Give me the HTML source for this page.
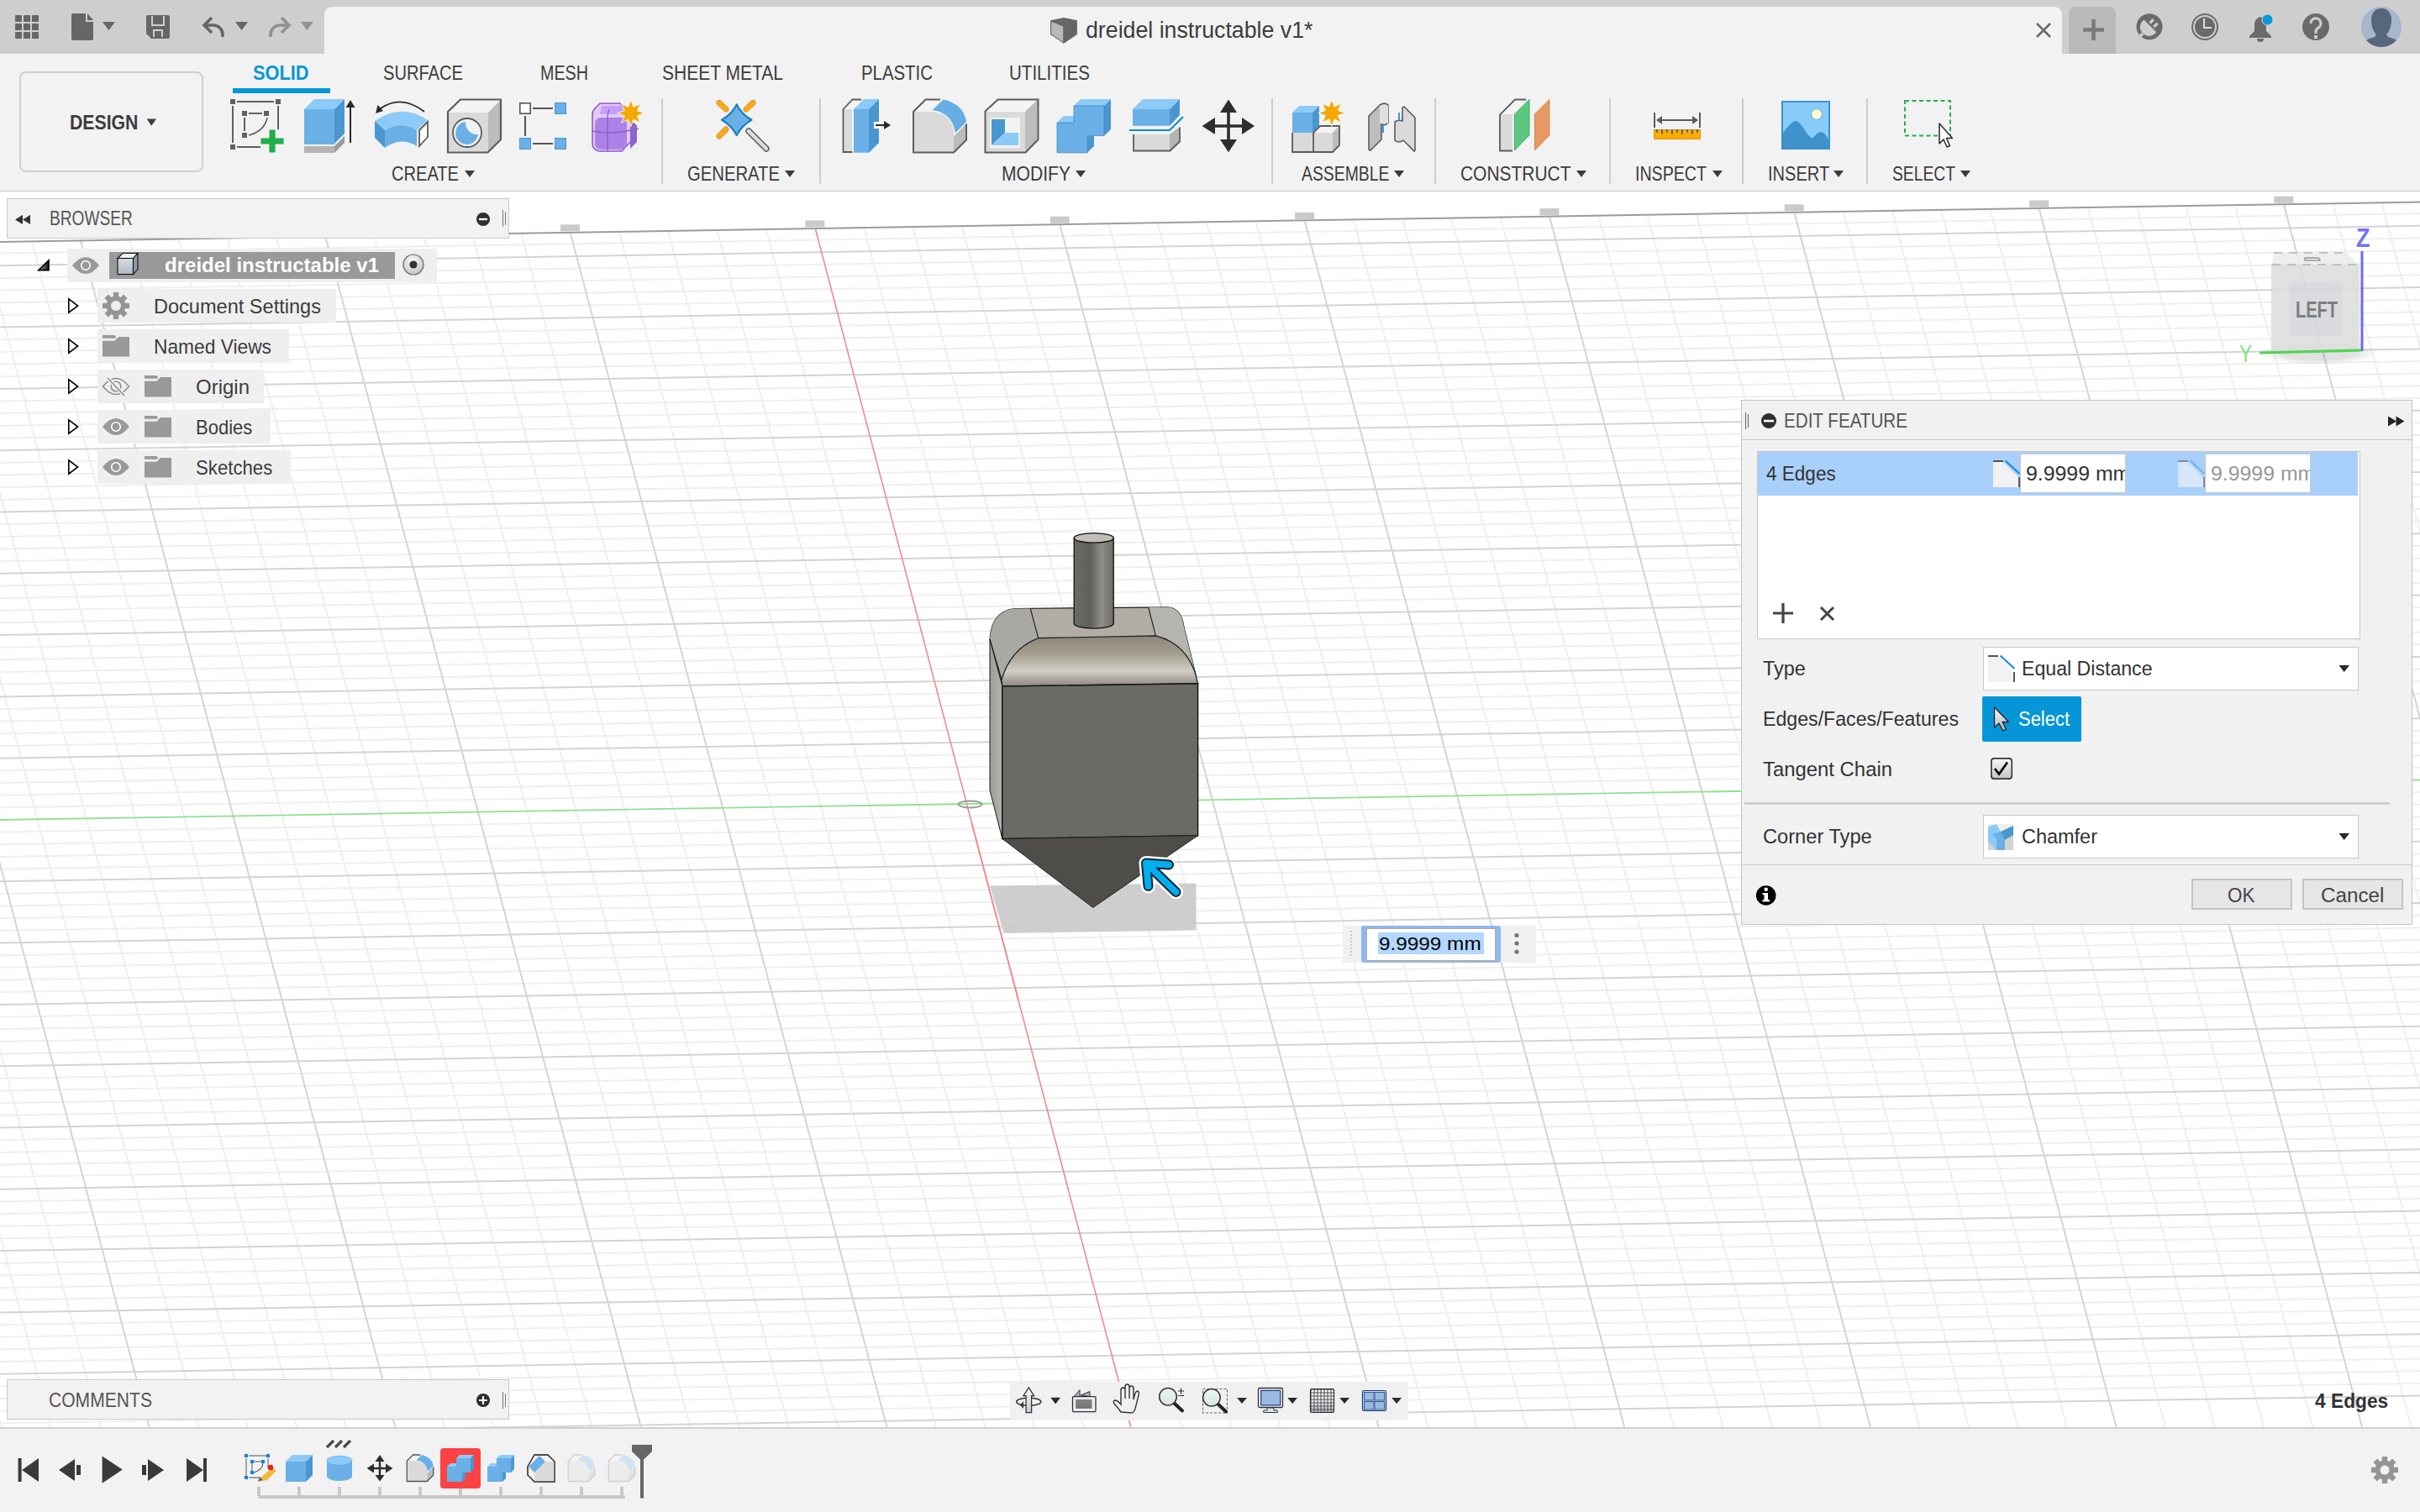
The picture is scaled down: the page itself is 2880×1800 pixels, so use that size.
<!DOCTYPE html><html><head><meta charset="utf-8"><style>
html,body{margin:0;padding:0}
body{width:2880px;height:1800px;position:relative;overflow:hidden;background:#fff;font-family:"Liberation Sans",sans-serif}
.t{position:absolute;white-space:nowrap;line-height:1;transform-origin:0 0;-webkit-font-smoothing:antialiased}
</style></head><body>
<svg style="position:absolute;left:0px;top:0px;" width="2880" height="1800" viewBox="0 0 2880 1800"><defs><clipPath id="gc"><polygon points="0,288 2880,240.5 2880,1700 0,1700"/></clipPath></defs><g clip-path="url(#gc)"><g stroke="#eeeeee" stroke-width="1.8"><line x1="0.0" y1="257.7" x2="2880.0" y2="210.1"/><line x1="0.0" y1="272.3" x2="2880.0" y2="224.8"/><line x1="0.0" y1="287.0" x2="2880.0" y2="239.5"/><line x1="0.0" y1="301.6" x2="2880.0" y2="254.1"/><line x1="0.0" y1="331.0" x2="2880.0" y2="283.4"/><line x1="0.0" y1="345.6" x2="2880.0" y2="298.1"/><line x1="0.0" y1="360.3" x2="2880.0" y2="312.8"/><line x1="0.0" y1="374.9" x2="2880.0" y2="327.4"/><line x1="0.0" y1="404.3" x2="2880.0" y2="356.7"/><line x1="0.0" y1="418.9" x2="2880.0" y2="371.4"/><line x1="0.0" y1="433.6" x2="2880.0" y2="386.1"/><line x1="0.0" y1="448.2" x2="2880.0" y2="400.7"/><line x1="0.0" y1="477.6" x2="2880.0" y2="430.0"/><line x1="0.0" y1="492.2" x2="2880.0" y2="444.7"/><line x1="0.0" y1="506.9" x2="2880.0" y2="459.4"/><line x1="0.0" y1="521.5" x2="2880.0" y2="474.0"/><line x1="0.0" y1="550.9" x2="2880.0" y2="503.3"/><line x1="0.0" y1="565.5" x2="2880.0" y2="518.0"/><line x1="0.0" y1="580.2" x2="2880.0" y2="532.7"/><line x1="0.0" y1="594.8" x2="2880.0" y2="547.3"/><line x1="0.0" y1="624.2" x2="2880.0" y2="576.6"/><line x1="0.0" y1="638.8" x2="2880.0" y2="591.3"/><line x1="0.0" y1="653.5" x2="2880.0" y2="606.0"/><line x1="0.0" y1="668.1" x2="2880.0" y2="620.6"/><line x1="0.0" y1="697.5" x2="2880.0" y2="649.9"/><line x1="0.0" y1="712.1" x2="2880.0" y2="664.6"/><line x1="0.0" y1="726.8" x2="2880.0" y2="679.3"/><line x1="0.0" y1="741.4" x2="2880.0" y2="693.9"/><line x1="0.0" y1="770.8" x2="2880.0" y2="723.2"/><line x1="0.0" y1="785.4" x2="2880.0" y2="737.9"/><line x1="0.0" y1="800.1" x2="2880.0" y2="752.6"/><line x1="0.0" y1="814.7" x2="2880.0" y2="767.2"/><line x1="0.0" y1="844.1" x2="2880.0" y2="796.5"/><line x1="0.0" y1="858.7" x2="2880.0" y2="811.2"/><line x1="0.0" y1="873.4" x2="2880.0" y2="825.9"/><line x1="0.0" y1="888.0" x2="2880.0" y2="840.5"/><line x1="0.0" y1="917.4" x2="2880.0" y2="869.8"/><line x1="0.0" y1="932.0" x2="2880.0" y2="884.5"/><line x1="0.0" y1="946.7" x2="2880.0" y2="899.2"/><line x1="0.0" y1="961.3" x2="2880.0" y2="913.8"/><line x1="0.0" y1="990.7" x2="2880.0" y2="943.1"/><line x1="0.0" y1="1005.3" x2="2880.0" y2="957.8"/><line x1="0.0" y1="1020.0" x2="2880.0" y2="972.5"/><line x1="0.0" y1="1034.6" x2="2880.0" y2="987.1"/><line x1="0.0" y1="1064.0" x2="2880.0" y2="1016.4"/><line x1="0.0" y1="1078.6" x2="2880.0" y2="1031.1"/><line x1="0.0" y1="1093.3" x2="2880.0" y2="1045.8"/><line x1="0.0" y1="1107.9" x2="2880.0" y2="1060.4"/><line x1="0.0" y1="1137.3" x2="2880.0" y2="1089.7"/><line x1="0.0" y1="1151.9" x2="2880.0" y2="1104.4"/><line x1="0.0" y1="1166.6" x2="2880.0" y2="1119.1"/><line x1="0.0" y1="1181.2" x2="2880.0" y2="1133.7"/><line x1="0.0" y1="1210.6" x2="2880.0" y2="1163.0"/><line x1="0.0" y1="1225.2" x2="2880.0" y2="1177.7"/><line x1="0.0" y1="1239.9" x2="2880.0" y2="1192.4"/><line x1="0.0" y1="1254.5" x2="2880.0" y2="1207.0"/><line x1="0.0" y1="1283.9" x2="2880.0" y2="1236.3"/><line x1="0.0" y1="1298.5" x2="2880.0" y2="1251.0"/><line x1="0.0" y1="1313.2" x2="2880.0" y2="1265.7"/><line x1="0.0" y1="1327.8" x2="2880.0" y2="1280.3"/><line x1="0.0" y1="1357.2" x2="2880.0" y2="1309.6"/><line x1="0.0" y1="1371.8" x2="2880.0" y2="1324.3"/><line x1="0.0" y1="1386.5" x2="2880.0" y2="1339.0"/><line x1="0.0" y1="1401.1" x2="2880.0" y2="1353.6"/><line x1="0.0" y1="1430.5" x2="2880.0" y2="1382.9"/><line x1="0.0" y1="1445.1" x2="2880.0" y2="1397.6"/><line x1="0.0" y1="1459.8" x2="2880.0" y2="1412.3"/><line x1="0.0" y1="1474.4" x2="2880.0" y2="1426.9"/><line x1="0.0" y1="1503.8" x2="2880.0" y2="1456.2"/><line x1="0.0" y1="1518.4" x2="2880.0" y2="1470.9"/><line x1="0.0" y1="1533.1" x2="2880.0" y2="1485.6"/><line x1="0.0" y1="1547.7" x2="2880.0" y2="1500.2"/><line x1="0.0" y1="1577.1" x2="2880.0" y2="1529.5"/><line x1="0.0" y1="1591.7" x2="2880.0" y2="1544.2"/><line x1="0.0" y1="1606.4" x2="2880.0" y2="1558.9"/><line x1="0.0" y1="1621.0" x2="2880.0" y2="1573.5"/><line x1="0.0" y1="1650.4" x2="2880.0" y2="1602.8"/><line x1="0.0" y1="1665.0" x2="2880.0" y2="1617.5"/><line x1="0.0" y1="1679.7" x2="2880.0" y2="1632.2"/><line x1="0.0" y1="1694.3" x2="2880.0" y2="1646.8"/><line x1="-387.7" y1="228.0" x2="2.4" y2="1700.0"/><line x1="-329.2" y1="228.0" x2="60.9" y2="1700.0"/><line x1="-270.7" y1="228.0" x2="119.4" y2="1700.0"/><line x1="-153.6" y1="228.0" x2="236.5" y2="1700.0"/><line x1="-95.1" y1="228.0" x2="295.0" y2="1700.0"/><line x1="-36.6" y1="228.0" x2="353.5" y2="1700.0"/><line x1="21.9" y1="228.0" x2="412.0" y2="1700.0"/><line x1="139.0" y1="228.0" x2="529.1" y2="1700.0"/><line x1="197.5" y1="228.0" x2="587.6" y2="1700.0"/><line x1="256.0" y1="228.0" x2="646.1" y2="1700.0"/><line x1="314.5" y1="228.0" x2="704.6" y2="1700.0"/><line x1="431.6" y1="228.0" x2="821.7" y2="1700.0"/><line x1="490.1" y1="228.0" x2="880.2" y2="1700.0"/><line x1="548.6" y1="228.0" x2="938.7" y2="1700.0"/><line x1="607.1" y1="228.0" x2="997.2" y2="1700.0"/><line x1="724.2" y1="228.0" x2="1114.3" y2="1700.0"/><line x1="782.7" y1="228.0" x2="1172.8" y2="1700.0"/><line x1="841.2" y1="228.0" x2="1231.3" y2="1700.0"/><line x1="899.8" y1="228.0" x2="1289.8" y2="1700.0"/><line x1="1016.8" y1="228.0" x2="1406.9" y2="1700.0"/><line x1="1075.3" y1="228.0" x2="1465.4" y2="1700.0"/><line x1="1133.8" y1="228.0" x2="1523.9" y2="1700.0"/><line x1="1192.3" y1="228.0" x2="1582.4" y2="1700.0"/><line x1="1309.4" y1="228.0" x2="1699.5" y2="1700.0"/><line x1="1367.9" y1="228.0" x2="1758.0" y2="1700.0"/><line x1="1426.4" y1="228.0" x2="1816.5" y2="1700.0"/><line x1="1485.0" y1="228.0" x2="1875.0" y2="1700.0"/><line x1="1602.0" y1="228.0" x2="1992.1" y2="1700.0"/><line x1="1660.5" y1="228.0" x2="2050.6" y2="1700.0"/><line x1="1719.0" y1="228.0" x2="2109.1" y2="1700.0"/><line x1="1777.5" y1="228.0" x2="2167.6" y2="1700.0"/><line x1="1894.6" y1="228.0" x2="2284.7" y2="1700.0"/><line x1="1953.1" y1="228.0" x2="2343.2" y2="1700.0"/><line x1="2011.6" y1="228.0" x2="2401.7" y2="1700.0"/><line x1="2070.2" y1="228.0" x2="2460.2" y2="1700.0"/><line x1="2187.2" y1="228.0" x2="2577.3" y2="1700.0"/><line x1="2245.7" y1="228.0" x2="2635.8" y2="1700.0"/><line x1="2304.2" y1="228.0" x2="2694.3" y2="1700.0"/><line x1="2362.7" y1="228.0" x2="2752.8" y2="1700.0"/><line x1="2479.8" y1="228.0" x2="2869.9" y2="1700.0"/><line x1="2538.3" y1="228.0" x2="2928.4" y2="1700.0"/><line x1="2596.8" y1="228.0" x2="2986.9" y2="1700.0"/><line x1="2655.3" y1="228.0" x2="3045.4" y2="1700.0"/><line x1="2772.4" y1="228.0" x2="3162.5" y2="1700.0"/><line x1="2830.9" y1="228.0" x2="3221.0" y2="1700.0"/><line x1="2889.4" y1="228.0" x2="3279.5" y2="1700.0"/></g><g stroke="#d4d4d4" stroke-width="2"><line x1="0.0" y1="316.3" x2="2880.0" y2="268.8"/><line x1="0.0" y1="389.6" x2="2880.0" y2="342.1"/><line x1="0.0" y1="462.9" x2="2880.0" y2="415.4"/><line x1="0.0" y1="536.2" x2="2880.0" y2="488.7"/><line x1="0.0" y1="609.5" x2="2880.0" y2="562.0"/><line x1="0.0" y1="682.8" x2="2880.0" y2="635.3"/><line x1="0.0" y1="756.1" x2="2880.0" y2="708.6"/><line x1="0.0" y1="829.4" x2="2880.0" y2="781.9"/><line x1="0.0" y1="902.7" x2="2880.0" y2="855.2"/><line x1="0.0" y1="1049.3" x2="2880.0" y2="1001.8"/><line x1="0.0" y1="1122.6" x2="2880.0" y2="1075.1"/><line x1="0.0" y1="1195.9" x2="2880.0" y2="1148.4"/><line x1="0.0" y1="1269.2" x2="2880.0" y2="1221.7"/><line x1="0.0" y1="1342.5" x2="2880.0" y2="1295.0"/><line x1="0.0" y1="1415.8" x2="2880.0" y2="1368.3"/><line x1="0.0" y1="1489.1" x2="2880.0" y2="1441.6"/><line x1="0.0" y1="1562.4" x2="2880.0" y2="1514.9"/><line x1="0.0" y1="1635.7" x2="2880.0" y2="1588.2"/><line x1="0.0" y1="1709.0" x2="2880.0" y2="1661.5"/><line x1="-212.1" y1="228.0" x2="177.9" y2="1700.0"/><line x1="80.5" y1="228.0" x2="470.6" y2="1700.0"/><line x1="373.1" y1="228.0" x2="763.1" y2="1700.0"/><line x1="665.7" y1="228.0" x2="1055.8" y2="1700.0"/><line x1="1250.9" y1="228.0" x2="1641.0" y2="1700.0"/><line x1="1543.5" y1="228.0" x2="1933.5" y2="1700.0"/><line x1="1836.1" y1="228.0" x2="2226.2" y2="1700.0"/><line x1="2128.7" y1="228.0" x2="2518.8" y2="1700.0"/><line x1="2421.3" y1="228.0" x2="2811.4" y2="1700.0"/><line x1="2713.9" y1="228.0" x2="3103.9" y2="1700.0"/></g><line x1="970" y1="271" x2="1346" y2="1700" stroke="#f08a8a" stroke-width="1.6"/><line x1="0" y1="976" x2="2880" y2="928.5" stroke="#90e090" stroke-width="1.8"/></g><line x1="0" y1="288" x2="2880" y2="240.5" stroke="#9c9c9c" stroke-width="2"/><rect x="667.1" y="267.3" width="23" height="8" fill="#b8b8b8" opacity="0.75"/><rect x="958.4" y="262.5" width="23" height="8" fill="#b8b8b8" opacity="0.75"/><rect x="1249.8" y="257.7" width="23" height="8" fill="#b8b8b8" opacity="0.75"/><rect x="1541.1" y="252.9" width="23" height="8" fill="#b8b8b8" opacity="0.75"/><rect x="1832.4" y="248.1" width="23" height="8" fill="#b8b8b8" opacity="0.75"/><rect x="2123.7" y="243.3" width="23" height="8" fill="#b8b8b8" opacity="0.75"/><rect x="2415.1" y="238.5" width="23" height="8" fill="#b8b8b8" opacity="0.75"/><rect x="2706.4" y="233.7" width="23" height="8" fill="#b8b8b8" opacity="0.75"/></svg>
<div style="position:absolute;left:0px;top:0px;width:2880px;height:64px;background:#cecece"></div>
<div style="position:absolute;left:386px;top:8px;width:2068px;height:56px;background:#f2f2f2;border-radius:9px 9px 0 0"></div>
<div style="position:absolute;left:2462px;top:8px;width:56px;height:56px;background:#b9b9b9;border-radius:8px 8px 0 0"></div>
<div class="t" style="left:1291.50px;top:22.45px;font-size:27.59px;color:#3c3c3c;transform:scaleX(0.9692);">dreidel instructable v1*</div>
<div style="position:absolute;left:0px;top:64px;width:2880px;height:163px;background:#f2f2f2"></div>
<div style="position:absolute;left:0px;top:227px;width:2880px;height:1px;background:#c8c8c8"></div>
<div style="position:absolute;left:23px;top:85px;width:219px;height:120px;border:2px solid #cfcfcf;border-radius:8px;box-sizing:border-box"></div>
<div class="t" style="left:83.00px;top:133.50px;font-size:23.98px;color:#3c3c3c;font-weight:bold;transform:scaleX(0.8864);">DESIGN</div>
<div class="t" style="left:300.50px;top:74.50px;font-size:23.98px;color:#0696d7;font-weight:bold;transform:scaleX(0.9073);">SOLID</div>
<div style="position:absolute;left:277px;top:105px;width:116px;height:6px;background:#0696d7"></div>
<div class="t" style="left:456.00px;top:74.50px;font-size:23.98px;color:#3c3c3c;transform:scaleX(0.8387);">SURFACE</div>
<div class="t" style="left:643.00px;top:74.50px;font-size:23.98px;color:#3c3c3c;transform:scaleX(0.8227);">MESH</div>
<div class="t" style="left:788.00px;top:74.50px;font-size:23.98px;color:#3c3c3c;transform:scaleX(0.8760);">SHEET METAL</div>
<div class="t" style="left:1025.00px;top:74.50px;font-size:23.98px;color:#3c3c3c;transform:scaleX(0.8503);">PLASTIC</div>
<div class="t" style="left:1201.00px;top:74.50px;font-size:23.98px;color:#3c3c3c;transform:scaleX(0.8575);">UTILITIES</div>
<div class="t" style="left:466.00px;top:195.91px;font-size:23.26px;color:#3c3c3c;transform:scaleX(0.8639);">CREATE</div>
<div class="t" style="left:818.00px;top:195.91px;font-size:23.26px;color:#3c3c3c;transform:scaleX(0.8716);">GENERATE</div>
<div class="t" style="left:1191.50px;top:195.91px;font-size:23.26px;color:#3c3c3c;transform:scaleX(0.9078);">MODIFY</div>
<div class="t" style="left:1549.00px;top:195.91px;font-size:23.26px;color:#3c3c3c;transform:scaleX(0.8335);">ASSEMBLE</div>
<div class="t" style="left:1738.00px;top:195.91px;font-size:23.26px;color:#3c3c3c;transform:scaleX(0.9008);">CONSTRUCT</div>
<div class="t" style="left:1946.00px;top:195.91px;font-size:23.26px;color:#3c3c3c;transform:scaleX(0.8433);">INSPECT</div>
<div class="t" style="left:2103.80px;top:195.91px;font-size:23.26px;color:#3c3c3c;transform:scaleX(0.8626);">INSERT</div>
<div class="t" style="left:2252.00px;top:195.91px;font-size:23.26px;color:#3c3c3c;transform:scaleX(0.8290);">SELECT</div>
<div style="position:absolute;left:787px;top:117px;width:2px;height:102px;background:#cdcdcd"></div>
<div style="position:absolute;left:975px;top:117px;width:2px;height:102px;background:#cdcdcd"></div>
<div style="position:absolute;left:1513px;top:117px;width:2px;height:102px;background:#cdcdcd"></div>
<div style="position:absolute;left:1707px;top:117px;width:2px;height:102px;background:#cdcdcd"></div>
<div style="position:absolute;left:1914.6px;top:117px;width:2.0px;height:102px;background:#cdcdcd"></div>
<div style="position:absolute;left:2073px;top:117px;width:2px;height:102px;background:#cdcdcd"></div>
<div style="position:absolute;left:2221px;top:117px;width:2px;height:102px;background:#cdcdcd"></div>
<svg style="position:absolute;left:0px;top:0px;" width="2880" height="1800" viewBox="0 0 2880 1800"><defs><linearGradient id="band" x1="0" y1="0" x2="0" y2="1"><stop offset="0" stop-color="#8a857a"/><stop offset="0.35" stop-color="#a39d8e"/><stop offset="0.7" stop-color="#d2cec6"/><stop offset="1" stop-color="#8c8880"/></linearGradient><linearGradient id="post" x1="0" y1="0" x2="1" y2="0"><stop offset="0" stop-color="#6c6c68"/><stop offset="0.4" stop-color="#5e5e5a"/><stop offset="0.7" stop-color="#8e8d88"/><stop offset="1" stop-color="#6e6d68"/></linearGradient><linearGradient id="side" x1="0" y1="0" x2="1" y2="0"><stop offset="0" stop-color="#9c9b96"/><stop offset="1" stop-color="#b4b3ad"/></linearGradient><linearGradient id="shadow" x1="0" y1="0" x2="0" y2="1"><stop offset="0" stop-color="#dcdcdc"/><stop offset="1" stop-color="#cccccc"/></linearGradient></defs><polygon points="1178,1054.5 1423.5,1051.5 1423.5,1107.5 1194.5,1111" fill="#cacaca" opacity="0.92"/><line x1="1156.5" y1="980" x2="1211.8" y2="1190" stroke="#f08a8a" stroke-width="1.6"/><path d="M1178,761 Q1180,728 1207,724.5 L1390,722.8 Q1406,724 1409,746.6 L1423.4,804.8 L1192,809 Z" fill="#b1ada4" stroke="#1a1a1a" stroke-width="1.2"/><path d="M1178,761 Q1180,728 1207,724.5 L1226.2,724.5 L1235.7,759.7 Q1205,770 1192,809 Z" fill="#a9a8a2"/><path d="M1366.7,722.8 L1390,722.8 Q1406,724 1409,746.6 L1423.4,804.8 Q1410,768 1375.4,756.8 Z" fill="#b6b4ae"/><path d="M1226.2,724.5 L1235.7,759.7 M1366.7,722.8 L1375.4,756.8 M1178,761 L1192,809" stroke="#1a1a1a" stroke-width="1.1" fill="none"/><polygon points="1178,761 1192.8,817 1192.8,998.5 1178,940.7" fill="url(#side)" stroke="#1a1a1a" stroke-width="1"/><path d="M1235.7,759.7 L1375.4,756.8 Q1412,766 1423.4,804.8 L1425.6,813.8 L1192.8,817 L1192,809 Q1203,772 1235.7,759.7 Z" fill="url(#band)" stroke="#1a1a1a" stroke-width="1.2"/><polygon points="1192.8,817 1425.6,813.8 1425.6,994.7 1192.8,998.5" fill="#6b6b66" stroke="#111" stroke-width="1.4"/><polygon points="1192.8,998.5 1425.6,994.7 1300.7,1080.4" fill="#4f4d49" stroke="#222" stroke-width="1"/><path d="M1278.2,640.4 V742.3 A23.5,5.8 0 0 0 1325.2,742.3 V640.4 Z" fill="url(#post)" stroke="#111" stroke-width="1.3"/><ellipse cx="1301.7" cy="640.4" rx="23.5" ry="5.8" fill="#c2beb6" stroke="#111" stroke-width="1.3"/><path d="M1391,1029.5 L1364,1027.5 L1366.5,1055 M1364,1027.5 L1399.5,1062" fill="none" stroke="#fff" stroke-width="17" stroke-linejoin="round" stroke-linecap="round"/><path d="M1391,1029.5 L1364,1027.5 L1366.5,1055 M1364,1027.5 L1399.5,1062" fill="none" stroke="#0c2636" stroke-width="12" stroke-linejoin="round" stroke-linecap="round"/><path d="M1391,1029.5 L1364,1027.5 L1366.5,1055 M1364,1027.5 L1399.5,1062" fill="none" stroke="#02aeee" stroke-width="8" stroke-linejoin="round" stroke-linecap="round"/><ellipse cx="1154.5" cy="957.5" rx="14" ry="4" fill="none" stroke="#9a9a9a" stroke-width="1.8"/><defs><radialGradient id="vcs" cx="0.5" cy="0.5" r="0.5"><stop offset="0.6" stop-color="#000" stop-opacity="0.12"/><stop offset="1" stop-color="#000" stop-opacity="0"/></radialGradient></defs><ellipse cx="2760" cy="420" rx="70" ry="14" fill="url(#vcs)"/><g opacity="0.88"><polygon points="2704,315 2706,301 2792,301 2808,315" fill="#ececec"/><rect x="2703" y="315" width="105" height="103" fill="#dedede"/><rect x="2724" y="336" width="64" height="64" fill="#d6d7da"/><path d="M2706,301 h86 M2704,315 h104" stroke="#aaa" stroke-width="1.5" stroke-dasharray="10,8"/><path d="M2743,307 h14 q4,0 4,3 h-18 z" fill="none" stroke="#888" stroke-width="1.5"/></g><text x="2732" y="378" font-family="Liberation Sans" font-weight="bold" font-size="27" fill="#7b7d82" textLength="50" lengthAdjust="spacingAndGlyphs">LEFT</text><path d="M2811,299 V418" stroke="#6a6af6" stroke-width="3"/><path d="M2689,420 L2810,417" stroke="#4fd64f" stroke-width="3.2"/><text x="2804" y="294" font-family="Liberation Sans" font-weight="bold" font-size="32" fill="#7474f4" textLength="16.5" lengthAdjust="spacingAndGlyphs">Z</text><text x="2665" y="431" font-family="Liberation Sans" font-size="30" fill="#7ee87e" textLength="15" lengthAdjust="spacingAndGlyphs">Y</text></svg>
<div style="position:absolute;left:8px;top:236px;width:598px;height:48px;background:#f2f2f2;border:1px solid #c9c9c9;box-sizing:border-box"></div>
<div class="t" style="left:58.70px;top:249.11px;font-size:23.26px;color:#555;transform:scaleX(0.8214);">BROWSER</div>
<div style="position:absolute;left:80px;top:296px;width:440px;height:40px;background:#efefef"></div>
<div style="position:absolute;left:130px;top:300px;width:340px;height:32px;background:#999"></div>
<div class="t" style="left:196.00px;top:303.78px;font-size:24.83px;color:#fff;font-weight:bold;transform:scaleX(0.9676);">dreidel instructable v1</div>
<div style="position:absolute;left:116px;top:344px;width:284px;height:40px;background:#efefef"></div>
<div class="t" style="left:183.00px;top:352.62px;font-size:23.84px;color:#3c3c3c;transform:scaleX(0.9881);">Document Settings</div>
<div style="position:absolute;left:116px;top:392px;width:228px;height:40px;background:#efefef"></div>
<div class="t" style="left:183.00px;top:400.62px;font-size:23.84px;color:#3c3c3c;transform:scaleX(0.9548);">Named Views</div>
<div style="position:absolute;left:116px;top:440px;width:198px;height:40px;background:#efefef"></div>
<div class="t" style="left:232.70px;top:448.62px;font-size:23.84px;color:#3c3c3c;transform:scaleX(1.0063);">Origin</div>
<div style="position:absolute;left:116px;top:488px;width:206px;height:40px;background:#efefef"></div>
<div class="t" style="left:232.70px;top:496.62px;font-size:23.84px;color:#3c3c3c;transform:scaleX(0.9233);">Bodies</div>
<div style="position:absolute;left:116px;top:536px;width:230px;height:40px;background:#efefef"></div>
<div class="t" style="left:232.70px;top:544.62px;font-size:23.84px;color:#3c3c3c;transform:scaleX(0.9312);">Sketches</div>
<div style="position:absolute;left:8px;top:1642px;width:598px;height:48px;background:#f2f2f2;border:1px solid #c9c9c9;box-sizing:border-box"></div>
<div class="t" style="left:58.00px;top:1655.81px;font-size:23.26px;color:#555;transform:scaleX(0.9067);">COMMENTS</div>
<div style="position:absolute;left:0px;top:1700px;width:2880px;height:100px;background:#f2f2f2"></div>
<div style="position:absolute;left:0px;top:1699px;width:2880px;height:2px;background:#d0d0d0"></div>
<div class="t" style="left:2754.70px;top:1656.28px;font-size:24.71px;color:#333;font-weight:bold;transform:scaleX(0.9213);">4 Edges</div>
<div style="position:absolute;left:2072px;top:476px;width:799px;height:48px;background:#f1f1f1;border:1px solid #c6c6c6;box-sizing:border-box"></div>
<div class="t" style="left:2123.00px;top:488.88px;font-size:24.71px;color:#555;transform:scaleX(0.8344);">EDIT FEATURE</div>
<div style="position:absolute;left:2072px;top:524px;width:799px;height:506px;background:#f1f1f1;border:1px solid #c6c6c6;border-top:none;box-sizing:border-box"></div>
<div style="position:absolute;left:2072px;top:1029px;width:799px;height:72px;background:#f1f1f1;border:1px solid #c6c6c6;box-sizing:border-box"></div>
<div style="position:absolute;left:2091px;top:537px;width:718px;height:224px;background:#fff;border:1px solid #c6c6c6;box-sizing:border-box"></div>
<div style="position:absolute;left:2092px;top:538px;width:714px;height:52px;background:#a9d0fb"></div>
<div class="t" style="left:2102.00px;top:552.67px;font-size:23.55px;color:#333;transform:scaleX(0.9573);">4 Edges</div>
<div style="position:absolute;left:2404px;top:540px;width:126px;height:47px;background:#fff;border:1px solid #c8c8c8;box-sizing:border-box;overflow:hidden"></div>
<div style="position:absolute;left:2405px;top:541px;width:124px;height:45px;overflow:hidden"><div class="t" style="left:5.70px;top:11.67px;font-size:23.55px;color:#333;transform:scaleX(1.0554)">9.9999 mm</div></div>
<div style="position:absolute;left:2624px;top:540px;width:126px;height:47px;background:#fff;border:1px solid #c8c8c8;box-sizing:border-box"></div>
<div style="position:absolute;left:2625px;top:541px;width:124px;height:45px;overflow:hidden"><div class="t" style="left:5.70px;top:11.67px;font-size:23.55px;color:#999;transform:scaleX(1.0554)">9.9999 mm</div></div>
<div style="position:absolute;left:2076px;top:955px;width:768px;height:3px;background:#cfcfcf"></div>
<div class="t" style="left:2098.00px;top:784.87px;font-size:23.55px;color:#333;transform:scaleX(0.9951);">Type</div>
<div class="t" style="left:2098.00px;top:845.27px;font-size:23.55px;color:#333;transform:scaleX(0.9835);">Edges/Faces/Features</div>
<div class="t" style="left:2098.00px;top:904.87px;font-size:23.55px;color:#333;transform:scaleX(1.0141);">Tangent Chain</div>
<div class="t" style="left:2098.00px;top:984.87px;font-size:23.55px;color:#333;transform:scaleX(1.0044);">Corner Type</div>
<div style="position:absolute;left:2360px;top:770px;width:447px;height:52px;background:#fff;border:1px solid #c8c8c8;box-sizing:border-box"></div>
<div class="t" style="left:2406.00px;top:784.87px;font-size:23.55px;color:#333;transform:scaleX(0.9819);">Equal Distance</div>
<div style="position:absolute;left:2360px;top:970px;width:447px;height:52px;background:#fff;border:1px solid #c8c8c8;box-sizing:border-box"></div>
<div class="t" style="left:2406.00px;top:984.87px;font-size:23.55px;color:#333;transform:scaleX(0.9967);">Chamfer</div>
<div style="position:absolute;left:2359px;top:829px;width:118px;height:54px;background:#0696d7;border-radius:2px"></div>
<div class="t" style="left:2402.00px;top:845.27px;font-size:23.55px;color:#fff;transform:scaleX(0.9322);">Select</div>
<div style="position:absolute;left:2369px;top:902px;width:26px;height:26px;background:#e0e0e0;border:2px solid #444;border-radius:4px;box-sizing:border-box"></div>
<div style="position:absolute;left:2608px;top:1046px;width:120px;height:37px;background:#e6e6e6;border:2px solid #c4c4c4;box-sizing:border-box"></div>
<div class="t" style="left:2651.00px;top:1054.00px;font-size:23.98px;color:#444;transform:scaleX(0.9378);">OK</div>
<div style="position:absolute;left:2740px;top:1046px;width:120px;height:37px;background:#e6e6e6;border:2px solid #c4c4c4;box-sizing:border-box"></div>
<div class="t" style="left:2761.50px;top:1054.00px;font-size:23.98px;color:#444;transform:scaleX(1.0113);">Cancel</div>
<div style="position:absolute;left:1598px;top:1102px;width:230px;height:44px;background:#f0f0f0"></div>
<div style="position:absolute;left:1620px;top:1102px;width:166px;height:44px;background:#8fb8ee;border-radius:3px"></div>
<div style="position:absolute;left:1626px;top:1105px;width:154px;height:39px;background:#fff;border:1px solid #b8a898;box-sizing:border-box"></div>
<div style="position:absolute;left:1640px;top:1110px;width:126px;height:26px;background:#b3d7ff"></div>
<div class="t" style="left:1641.00px;top:1112.16px;font-size:22.97px;color:#000;transform:scaleX(1.0586);">9.9999 mm</div>
<div style="position:absolute;left:1202px;top:1645px;width:474px;height:46px;background:#f0f0f0"></div>
<svg style="position:absolute;left:0px;top:0px;" width="2880" height="1800" viewBox="0 0 2880 1800"><rect x="18" y="18" width="8" height="8" fill="#666" rx="0.8"/><rect x="18" y="28" width="8" height="8" fill="#666" rx="0.8"/><rect x="18" y="38" width="8" height="8" fill="#666" rx="0.8"/><rect x="28" y="18" width="8" height="8" fill="#666" rx="0.8"/><rect x="28" y="28" width="8" height="8" fill="#666" rx="0.8"/><rect x="28" y="38" width="8" height="8" fill="#666" rx="0.8"/><rect x="38" y="18" width="8" height="8" fill="#666" rx="0.8"/><rect x="38" y="28" width="8" height="8" fill="#666" rx="0.8"/><rect x="38" y="38" width="8" height="8" fill="#666" rx="0.8"/><path d="M85,18 a2,2 0 0 1 2,-2 h15 v10 h9 v20 a2,2 0 0 1 -2,2 h-22 a2,2 0 0 1 -2,-2 z" fill="#666"/><polygon points="104,16 111,24 104,24" fill="#666"/><polygon points="122,26 137,26 129.5,36" fill="#666"/><path d="M174,20 a2,2 0 0 1 2,-2 h24 a2,2 0 0 1 2,2 v24 a2,2 0 0 1 -2,2 h-20 l-6,-6 z" fill="#666"/><path d="M181,19 v11 h14 v-11" fill="none" stroke="#cecece" stroke-width="2"/><path d="M183,44 v-8 h10 v8" fill="none" stroke="#cecece" stroke-width="2"/><path d="M252,21 l-9,9 l9,9" fill="none" stroke="#666" stroke-width="3.6"/><path d="M244,30 h10 a11,11 0 0 1 11,11 v3" fill="none" stroke="#666" stroke-width="3.6"/><polygon points="280,26 295,26 287.5,36" fill="#666"/><path d="M335,21 l9,9 l-9,9" fill="none" stroke="#909090" stroke-width="3.6"/><path d="M343,30 h-10 a11,11 0 0 0 -11,11 v3" fill="none" stroke="#909090" stroke-width="3.6"/><polygon points="358,26 373,26 365.5,36" fill="#909090"/><polygon points="1250,24.2 1265.9,21 1281.9,24.2 1281.9,41.1 1265.9,51.8 1250,41.1" fill="#666"/><polygon points="1251.2,25.8 1265.2,31.5 1265.2,50 1251.2,40.6" fill="#b8b9b8"/><path d="M2424,28 L2440,44 M2440,28 L2424,44" stroke="#6a6a6a" stroke-width="2.6"/><path d="M2491.5,23 v25 M2479,35.5 h25" stroke="#7a7a7a" stroke-width="4.5"/><defs><clipPath id="extc"><polygon points="2530,10 2551,23 2567,39 2590,60 2530,60"/></clipPath></defs><circle cx="2558" cy="31.8" r="15.5" fill="#6a6a6a"/><circle cx="2557.5" cy="32.3" r="10.6" fill="#cecece" clip-path="url(#extc)"/><path d="M2558.5,27.5 L2562.8,23.2 M2563.3,32 L2567.6,27.7" stroke="#cecece" stroke-width="3.3"/><path d="M2550,40 L2543,47" stroke="#cecece" stroke-width="3.6"/><circle cx="2624" cy="32" r="15" fill="none" stroke="#6a6a6a" stroke-width="2"/><circle cx="2624" cy="32" r="12" fill="#6a6a6a"/><path d="M2623,22 v11 h9" fill="none" stroke="#ddd" stroke-width="2"/><path d="M2690,16 v4 a9,9 0 0 1 7,9 v8 l6,6 v2 h-26 v-2 l6,-6 v-8 a9,9 0 0 1 7,-9 v-4 z" fill="#6a6a6a"/><path d="M2686,46 h8 a4,4 0 0 1 -8,0 z" fill="#6a6a6a"/><circle cx="2698.5" cy="23.5" r="6.5" fill="#0a96dc" stroke="#cecece" stroke-width="1"/><circle cx="2756" cy="32" r="16" fill="#6a6a6a"/><path d="M2750,28 a6,6 0 1 1 9,5 q-3,2 -3,5 v2" fill="none" stroke="#cecece" stroke-width="3.2"/><rect x="2754" y="42" width="4" height="4" fill="#cecece"/><defs><clipPath id="av"><circle cx="2834" cy="32" r="24"/></clipPath></defs><circle cx="2834" cy="32" r="24" fill="#a6b6cc"/><g clip-path="url(#av)"><path d="M2834,10 c-8,0 -12,6 -12,14 c0,8 3,14 6,17 l-2,3 c-8,2 -16,6 -18,14 h52 c-2,-8 -10,-12 -18,-14 l-2,-3 c3,-3 6,-9 6,-17 c0,-8 -4,-14 -12,-14 z" fill="#56667c"/></g><polygon points="174.6,141.6 186,141.6 180.3,149.7" fill="#3c3c3c"/><polygon points="553,203 565,203 559,211" fill="#3c3c3c"/><polygon points="934,203 946,203 940,211" fill="#3c3c3c"/><polygon points="1280,203 1292,203 1286,211" fill="#3c3c3c"/><polygon points="1659,203 1671,203 1665,211" fill="#3c3c3c"/><polygon points="1876,203 1888,203 1882,211" fill="#3c3c3c"/><polygon points="2038,203 2050,203 2044,211" fill="#3c3c3c"/><polygon points="2182,203 2194,203 2188,211" fill="#3c3c3c"/><polygon points="2333,203 2345,203 2339,211" fill="#3c3c3c"/><rect x="274" y="118" width="6" height="6" fill="#606060"/><rect x="328" y="118" width="6" height="6" fill="#606060"/><rect x="274" y="172" width="6" height="6" fill="#606060"/><rect x="288" y="132" width="6" height="6" fill="#606060"/><rect x="314" y="132" width="6" height="6" fill="#606060"/><rect x="288" y="158" width="6" height="6" fill="#606060"/><path d="M282,121 h44 M277,126 v44 M331,126 v28 M282,175 h28 M296,135 h16 M291,140 v16" stroke="#606060" stroke-width="2"/><path d="M296,161 Q315,156 318,140" fill="none" stroke="#606060" stroke-width="1.6"/><path d="M320,154 h8 v10 h10 v8 h-10 v10 h-8 v-10 h-10 v-8 h10 z" fill="#22ae4c" stroke="#fff" stroke-width="0.8"/><polygon points="362,174 398,174 398,182 362,182" fill="#b4b4b4" stroke="none" stroke-width="0" stroke-linejoin="miter" /><polygon points="398,174 410,162 410,170 398,182" fill="#9c9c9c" stroke="none" stroke-width="0" stroke-linejoin="miter" /><polygon points="362,130 374,118 410,118 398,130" fill="#8ccbf8" stroke="none" stroke-width="0" stroke-linejoin="miter" /><polygon points="362,130 398,130 398,172 362,172" fill="#6ab0e6" stroke="none" stroke-width="0" stroke-linejoin="miter" /><polygon points="398,130 410,118 410,159 398,171" fill="#4a96d0" stroke="none" stroke-width="0" stroke-linejoin="miter" /><path d="M417,170 v-42" stroke="#2a2a2a" stroke-width="2"/><polygon points="411.5,128 417,119 422.5,128" fill="#2a2a2a" stroke="none" stroke-width="0" stroke-linejoin="miter" /><path d="M505,133 Q478,112 453,129" fill="none" stroke="#2a2a2a" stroke-width="1.8"/><polygon points="447,135 449.5,125 456,132" fill="#2a2a2a" stroke="none" stroke-width="0" stroke-linejoin="miter" /><path d="M446,144 Q478,122 509,143 L496,155 Q477,143 458,155 Z" fill="#8ccbf8"/><path d="M458,155 Q477,143 496,155 V174 Q477,162 458,176 Z" fill="#6ab0e6"/><path d="M446,144 L458,155 V176 L446,164 Z" fill="#4a96d0"/><polygon points="499,155 509,145 509,163 499,174" fill="#fff" stroke="#5c5c5c" stroke-width="1.8" stroke-linejoin="miter" /><polygon points="534,134 548,120 595,120 581,134" fill="#f4f4f4" stroke="none" stroke-width="0" stroke-linejoin="miter" /><polygon points="534,134 581,134 581,181 534,181" fill="#dadada" stroke="none" stroke-width="0" stroke-linejoin="miter" /><polygon points="581,134 595,120 595,166 581,181" fill="#bcbcbc" stroke="none" stroke-width="0" stroke-linejoin="miter" /><polygon points="533,133 548,118.5 596,118.5 596,166 580.5,181.5 533,181.5" fill="none" stroke="#5c5c5c" stroke-width="2.2" stroke-linejoin="miter" /><circle cx="556" cy="158" r="17" fill="#f2f2f2" stroke="#5c5c5c" stroke-width="1.8"/><path d="M554,145 A13.5,13.5 0 1 0 569,160 A14,14 0 0 1 554,145 Z" fill="#6ab0e6"/><rect x="618.8" y="122.8" width="12.4" height="12.4" fill="#fff" stroke="#555" stroke-width="1.6"/><rect x="660.5" y="122.5" width="13" height="13" fill="#6ab0e6" stroke="#4a96d0" stroke-width="1"/><rect x="618.5" y="164.5" width="13" height="13" fill="#6ab0e6" stroke="#4a96d0" stroke-width="1"/><rect x="660.5" y="164.5" width="13" height="13" fill="#6ab0e6" stroke="#4a96d0" stroke-width="1"/><path d="M634,129 h24 M634,171 h24 M625,138 v24" stroke="#555" stroke-width="2"/><path d="M714,123 h24 l14,14 v30 l-12,13 h-26 a9,9 0 0 1 -9,-9 v-34 a12,12 0 0 1 3,-8 z" fill="#e0cbf6" stroke="#8a5cc4" stroke-width="1.6"/><rect x="708" y="140" width="38" height="38" rx="7" fill="#ac82e8"/><path d="M716,126 h28 l-4,10 h-26 z" fill="#c89cfc"/><path d="M750,143 l8,6 v20 l-8,8 z" fill="#9064d0"/><path d="M705,156 q25,5 55,-3 M725,130 q-2,4 -2,12 v38" fill="none" stroke="#8a62c4" stroke-width="1.4"/><polygon points="750.80,118.80 753.86,127.41 762.11,123.49 758.19,131.74 766.80,134.80 758.19,137.86 762.11,146.11 753.86,142.19 750.80,150.80 747.74,142.19 739.49,146.11 743.41,137.86 734.80,134.80 743.41,131.74 739.49,123.49 747.74,127.41" fill="#f5a800" stroke="#fff" stroke-width="0.8"/><path d="M856,122.5 L864,130" stroke="#e8951a" stroke-width="7" stroke-linecap="round"/><path d="M856,122.5 L864,130" stroke="#f8aa20" stroke-width="5" stroke-linecap="round"/><path d="M896,122.5 L888,130" stroke="#e8951a" stroke-width="7" stroke-linecap="round"/><path d="M896,122.5 L888,130" stroke="#f8aa20" stroke-width="5" stroke-linecap="round"/><path d="M856,162 L864,154" stroke="#e8951a" stroke-width="7" stroke-linecap="round"/><path d="M856,162 L864,154" stroke="#f8aa20" stroke-width="5" stroke-linecap="round"/><path d="M876.7,124.5 Q883,136.5 894.5,142.7 Q883,149 876.7,161 Q870.5,149 859,142.7 Q870.5,136.5 876.7,124.5 Z" fill="#6ab0e6" stroke="#1a80c4" stroke-width="2.2" stroke-linejoin="round"/><path d="M891,156 L912,177" stroke="#666" stroke-width="7.5" stroke-linecap="round"/><path d="M891,156 L912,177" stroke="#dcdcdc" stroke-width="4.5" stroke-linecap="round"/><polygon points="1003.5,130 1015,118.5 1025,118.5 1014,130" fill="#f4f4f4" stroke="none" stroke-width="0" stroke-linejoin="miter" /><polygon points="1003.5,130 1014,130 1014,181 1003.5,181" fill="#dadada" stroke="none" stroke-width="0" stroke-linejoin="miter" /><path d="M1025,118.5 h-10.5 l-11,11.5 v51 h11" fill="none" stroke="#5c5c5c" stroke-width="1.8"/><polygon points="1016,130 1028,118 1046,118 1034,130" fill="#8ccbf8" stroke="none" stroke-width="0" stroke-linejoin="miter" /><polygon points="1016,130 1034,130 1034,181.75 1016,181.75" fill="#6ab0e6" stroke="none" stroke-width="0" stroke-linejoin="miter" /><polygon points="1034,130 1046,118 1046,170 1034,181.75" fill="#4a96d0" stroke="none" stroke-width="0" stroke-linejoin="miter" /><rect x="1040" y="145" width="8" height="8" fill="#fff"/><path d="M1042,149 h12" stroke="#2a2a2a" stroke-width="2"/><polygon points="1052,144 1060,149 1052,154" fill="#2a2a2a" stroke="none" stroke-width="0" stroke-linejoin="miter" /><polygon points="1087,133 1101.5,118.5 1119,118.5 1106,131.5" fill="#f4f4f4" stroke="none" stroke-width="0" stroke-linejoin="miter" /><path d="M1087,133 H1107 Q1134,134 1135.5,161 V181 H1087 Z" fill="#dadada"/><polygon points="1136.5,161 1150,147 1150,166 1135,181 1135,163" fill="#bcbcbc" stroke="none" stroke-width="0" stroke-linejoin="miter" /><path d="M1119,118.5 h-17.5 l-14.5,14.5 v48.5 h48 l15,-15 v-19" fill="none" stroke="#5c5c5c" stroke-width="2"/><path d="M1109.5,131 L1122.5,118.5 Q1147,124 1150,145 L1137,158 Q1133,134 1109.5,131 Z" fill="#66aee4"/><polygon points="1173,133 1187.5,118.5 1235,118.5 1220,133" fill="#f4f4f4" stroke="none" stroke-width="0" stroke-linejoin="miter" /><polygon points="1173,133 1220,133 1220,181 1173,181" fill="#dadada" stroke="none" stroke-width="0" stroke-linejoin="miter" /><polygon points="1220,133 1235,118.5 1235,166 1220,181" fill="#bcbcbc" stroke="none" stroke-width="0" stroke-linejoin="miter" /><polygon points="1172.5,132.5 1187.5,118.5 1235.5,118.5 1235.5,166 1220.5,181.5 1172.5,181.5" fill="none" stroke="#5c5c5c" stroke-width="2" stroke-linejoin="miter" /><rect x="1178" y="140" width="36" height="36" fill="#f2f2f2"/><polygon points="1180,142 1196,142 1196,158 1180,173" fill="#4a96d0" stroke="none" stroke-width="0" stroke-linejoin="miter" /><polygon points="1196,158 1212,158 1212,173 1180,173" fill="#8ccbf8" stroke="none" stroke-width="0" stroke-linejoin="miter" /><polygon points="1278,126 1286,118 1322,118 1314,126" fill="#8ccbf8" stroke="none" stroke-width="0" stroke-linejoin="miter" /><polygon points="1314,126 1322,118 1322,154 1314,161.6" fill="#4a96d0" stroke="none" stroke-width="0" stroke-linejoin="miter" /><polygon points="1258,146 1266,138 1278,138 1278,146" fill="#8ccbf8" stroke="none" stroke-width="0" stroke-linejoin="miter" /><polygon points="1258,146 1278,146 1278,126 1314,126 1314,161.6 1294,161.6 1294,181.8 1258,181.8" fill="#6ab0e6" stroke="#3d88c6" stroke-width="0.8" stroke-linejoin="miter" /><polygon points="1294,161.6 1302,161.6 1302,174 1294,181.8" fill="#4a96d0" stroke="none" stroke-width="0" stroke-linejoin="miter" /><polygon points="1348,130 1360,118 1404,118 1392,130" fill="#8ccbf8" stroke="none" stroke-width="0" stroke-linejoin="miter" /><polygon points="1348,130 1392,130 1392,149.8 1348,149.8" fill="#6ab0e6" stroke="none" stroke-width="0" stroke-linejoin="miter" /><polygon points="1392,130 1404,118 1404,137 1392,149.8" fill="#4a96d0" stroke="none" stroke-width="0" stroke-linejoin="miter" /><path d="M1344,155 h48 l16,-16" fill="none" stroke="#0a84e0" stroke-width="2"/><polygon points="1349,160 1392,160 1392,179 1349,179" fill="#dadada" stroke="none" stroke-width="0" stroke-linejoin="miter" /><polygon points="1392,160 1404,151 1404,168 1392,179" fill="#b4b4b4" stroke="none" stroke-width="0" stroke-linejoin="miter" /><path d="M1349,160 v19.5 h43.5 l11.5,-11 v-17" fill="none" stroke="#5c5c5c" stroke-width="1.8"/><path d="M1462,132 v36 M1444,150 h36" stroke="#2e2e2e" stroke-width="3.6"/><polygon points="1462,118.4 1472,134 1452,134" fill="#2e2e2e" stroke="none" stroke-width="0" stroke-linejoin="miter" /><polygon points="1462,181.3 1472,166 1452,166" fill="#2e2e2e" stroke="none" stroke-width="0" stroke-linejoin="miter" /><polygon points="1430.5,150 1446,140 1446,160" fill="#2e2e2e" stroke="none" stroke-width="0" stroke-linejoin="miter" /><polygon points="1493,150 1478,140 1478,160" fill="#2e2e2e" stroke="none" stroke-width="0" stroke-linejoin="miter" /><polygon points="1538,134 1546,126 1570,126 1562,134" fill="#8ccbf8" stroke="none" stroke-width="0" stroke-linejoin="miter" /><polygon points="1538,134 1562,134 1562,158 1538,158" fill="#6ab0e6" stroke="none" stroke-width="0" stroke-linejoin="miter" /><polygon points="1562,134 1570,126 1570,150 1562,158" fill="#4a96d0" stroke="none" stroke-width="0" stroke-linejoin="miter" /><polygon points="1563,158 1571,150 1594,150 1586,158" fill="#f4f4f4" stroke="none" stroke-width="0" stroke-linejoin="miter" /><polygon points="1538,158 1586,158 1586,181 1538,181" fill="#dadada" stroke="none" stroke-width="0" stroke-linejoin="miter" /><polygon points="1586,158 1594,150 1594,173 1586,181" fill="#bcbcbc" stroke="none" stroke-width="0" stroke-linejoin="miter" /><path d="M1538,158 v23 h48 l8,-8 v-23 h-23 l-8,8 v23" fill="none" stroke="#5c5c5c" stroke-width="1.8"/><polygon points="1584.90,118.50 1587.96,127.11 1596.21,123.19 1592.29,131.44 1600.90,134.50 1592.29,137.56 1596.21,145.81 1587.96,141.89 1584.90,150.50 1581.84,141.89 1573.59,145.81 1577.51,137.56 1568.90,134.50 1577.51,131.44 1573.59,123.19 1581.84,127.11" fill="#f5a800" stroke="#fff" stroke-width="0.8"/><path d="M1629,138 l13,-13 q6,-4 10,0 v21 q-3,4 -8,2 v18 l-13,13 l-2,-1 z" fill="#bdbdbd" stroke="#5c5c5c" stroke-width="1.6"/><path d="M1642,126 q5,-3 10,0 v20 q-5,3 -10,0 z" fill="#e0e0e0"/><path d="M1646,148 v10" stroke="#0a84e0" stroke-width="1.6"/><path d="M1684,140 l-13,-13 l-2,1 v16 q-5,-2 -9,1 v22 q5,4 10,0 l13,13 l1,-1 z" fill="#dadada" stroke="#5c5c5c" stroke-width="1.6"/><path d="M1665,134 v10" stroke="#0a84e0" stroke-width="1.6"/><polygon points="1785,136 1803,118 1816,118 1799,136" fill="#f4f4f4" stroke="none" stroke-width="0" stroke-linejoin="miter" /><polygon points="1785,136 1800,136 1800,179.5 1785,179.5" fill="#dadada" stroke="none" stroke-width="0" stroke-linejoin="miter" /><path d="M1816,118.5 h-13 l-18,18 v43 h15" fill="none" stroke="#5c5c5c" stroke-width="1.8"/><polygon points="1802.5,136 1820,118.5 1820,161 1802.5,179" fill="#5cc77e" stroke="#3fae62" stroke-width="1" stroke-linejoin="miter" /><polygon points="1826.5,136 1844,118.5 1844,161 1826.5,179" fill="#e89a64" stroke="#d8844c" stroke-width="1" stroke-linejoin="miter" /><path d="M1969,134 v18 M2023,134 v18 M1976,143 h40" stroke="#5c5c5c" stroke-width="2"/><polygon points="1971,143 1978,138 1978,148" fill="#5c5c5c" stroke="none" stroke-width="0" stroke-linejoin="miter" /><polygon points="2021,143 2014,138 2014,148" fill="#5c5c5c" stroke="none" stroke-width="0" stroke-linejoin="miter" /><rect x="1968.5" y="154.5" width="55" height="11" fill="#ffac00" stroke="#e39300" stroke-width="1"/><rect x="1971" y="154" width="1.8" height="3.7" fill="#4a5a78"/><rect x="1977" y="154" width="1.8" height="5.6" fill="#4a5a78"/><rect x="1983" y="154" width="1.8" height="3.7" fill="#4a5a78"/><rect x="1989" y="154" width="1.8" height="5.6" fill="#4a5a78"/><rect x="1995" y="154" width="1.8" height="3.7" fill="#4a5a78"/><rect x="2001" y="154" width="1.8" height="5.6" fill="#4a5a78"/><rect x="2007" y="154" width="1.8" height="3.7" fill="#4a5a78"/><rect x="2013" y="154" width="1.8" height="5.6" fill="#4a5a78"/><rect x="2019" y="154" width="1.8" height="3.7" fill="#4a5a78"/><rect x="2121" y="121" width="56" height="56" fill="#88ccfc" stroke="#3d92cc" stroke-width="2"/><path d="M2122,158 Q2132,144 2137,144 Q2142,144 2151,160 L2157,165 Q2163,157 2167,157 Q2171,157 2176,166 V176 H2122 Z" fill="#3f92cc"/><circle cx="2162" cy="136" r="6.5" fill="#fffdd0" stroke="#72b4e0" stroke-width="1.2"/><rect x="2267" y="120" width="54" height="41.5" fill="none" stroke="#22ae4c" stroke-width="2" stroke-dasharray="5,3.5"/><path d="M2308,147 v24 l5,-5 l4,9 l3.5,-1.5 l-4,-9 h7 z" fill="#fff" stroke="#2a2a2a" stroke-width="1.5" stroke-linejoin="round"/><polygon points="18,261.4 27,255.7 27,267" fill="#333"/><polygon points="27,261.4 36,255.7 36,267" fill="#333"/><circle cx="575" cy="261" r="8" fill="#2e2e2e"/><rect x="570" y="259.8" width="10" height="2.4" fill="#fff"/><path d="M598.5,250 v20 M601.5,252 v16" stroke="#777" stroke-width="1"/><defs><linearGradient id="tg" x1="0" y1="0" x2="1" y2="0"><stop offset="0" stop-color="#aaa"/><stop offset="1" stop-color="#111"/></linearGradient><linearGradient id="cg" x1="0" y1="0" x2="0" y2="1"><stop offset="0" stop-color="#d8dce4"/><stop offset="1" stop-color="#b2b9c6"/></linearGradient><radialGradient id="rg" cx="0.45" cy="0.35" r="0.7"><stop offset="0" stop-color="#fff"/><stop offset="1" stop-color="#b8bcc4"/></radialGradient></defs><polygon points="45.8,321.6 58,321.6 58,309.8" fill="url(#tg)" stroke="#000" stroke-width="1.6"/><path d="M86,316 Q102,296 118,316 Q102,336 86,316 z" fill="#999"/><circle cx="102" cy="316" r="5.3" fill="#999" stroke="#fff" stroke-width="1.6"/><polygon points="140,307.5 146,301.5 164,301.5 158.5,307.5" fill="#f2f3f6" stroke="#111" stroke-width="1.1"/><rect x="140" y="307.5" width="18.5" height="19" fill="url(#cg)" stroke="#111" stroke-width="1.1"/><polygon points="158.5,307.5 164,301.5 164,320.5 158.5,326.5" fill="#8e9aab" stroke="#111" stroke-width="1.1"/><circle cx="492" cy="315" r="12" fill="url(#rg)" stroke="#666" stroke-width="1.2"/><circle cx="492" cy="315" r="4.6" fill="#333"/><polygon points="81.8,355.8 81.8,372.2 92.6,364" fill="#fff" stroke="#000" stroke-width="1.6" stroke-linejoin="miter"/><circle cx="138" cy="364" r="11.52" fill="#959595"/><rect x="134.8" y="348" width="6.4" height="9.6" fill="#959595" transform="rotate(0 138 364)"/><rect x="134.8" y="348" width="6.4" height="9.6" fill="#959595" transform="rotate(45 138 364)"/><rect x="134.8" y="348" width="6.4" height="9.6" fill="#959595" transform="rotate(90 138 364)"/><rect x="134.8" y="348" width="6.4" height="9.6" fill="#959595" transform="rotate(135 138 364)"/><rect x="134.8" y="348" width="6.4" height="9.6" fill="#959595" transform="rotate(180 138 364)"/><rect x="134.8" y="348" width="6.4" height="9.6" fill="#959595" transform="rotate(225 138 364)"/><rect x="134.8" y="348" width="6.4" height="9.6" fill="#959595" transform="rotate(270 138 364)"/><rect x="134.8" y="348" width="6.4" height="9.6" fill="#959595" transform="rotate(315 138 364)"/><circle cx="138" cy="364" r="6" fill="#efefef"/><polygon points="81.8,403.8 81.8,420.2 92.6,412" fill="#fff" stroke="#000" stroke-width="1.6" stroke-linejoin="miter"/><path d="M122,399 h14.5 l1.2,1.5 v2.3 h-15.7 z" fill="#999"/><path d="M122,405.7 h14.4 l4.6,-4.6 h13 v23.5 h-32 z" fill="#999"/><polygon points="81.8,451.8 81.8,468.2 92.6,460" fill="#fff" stroke="#000" stroke-width="1.6" stroke-linejoin="miter"/><path d="M122.5,460 Q138,441 153.5,460 Q138,479 122.5,460 z" fill="none" stroke="#8f8f8f" stroke-width="1.6"/><circle cx="138" cy="460" r="5.8" fill="none" stroke="#8f8f8f" stroke-width="1.6"/><path d="M128,450 L148,471" stroke="#f0f0f0" stroke-width="4"/><path d="M128,450 L148,471" stroke="#8f8f8f" stroke-width="1.6"/><path d="M172,447 h14.5 l1.2,1.5 v2.3 h-15.7 z" fill="#999"/><path d="M172,453.7 h14.4 l4.6,-4.6 h13 v23.5 h-32 z" fill="#999"/><polygon points="81.8,499.8 81.8,516.2 92.6,508" fill="#fff" stroke="#000" stroke-width="1.6" stroke-linejoin="miter"/><path d="M122,508 Q138,488 154,508 Q138,528 122,508 z" fill="#999"/><circle cx="138" cy="508" r="5.3" fill="#999" stroke="#fff" stroke-width="1.6"/><path d="M172,495 h14.5 l1.2,1.5 v2.3 h-15.7 z" fill="#999"/><path d="M172,501.7 h14.4 l4.6,-4.6 h13 v23.5 h-32 z" fill="#999"/><polygon points="81.8,547.8 81.8,564.2 92.6,556" fill="#fff" stroke="#000" stroke-width="1.6" stroke-linejoin="miter"/><path d="M122,556 Q138,536 154,556 Q138,576 122,556 z" fill="#999"/><circle cx="138" cy="556" r="5.3" fill="#999" stroke="#fff" stroke-width="1.6"/><path d="M172,543 h14.5 l1.2,1.5 v2.3 h-15.7 z" fill="#999"/><path d="M172,549.7 h14.4 l4.6,-4.6 h13 v23.5 h-32 z" fill="#999"/><circle cx="575" cy="1667" r="8" fill="#2e2e2e"/><path d="M570,1667 h10 M575,1662 v10" stroke="#fff" stroke-width="2.2"/><path d="M598.5,1657 v20 M601.5,1659 v16" stroke="#777" stroke-width="1"/><rect x="21.6" y="1736" width="4" height="28" fill="#3a3a3a"/><polygon points="26,1750 46,1736 46,1764" fill="#3a3a3a"/><polygon points="70,1750 89,1737 89,1763" fill="#3a3a3a"/><rect x="91" y="1744" width="5" height="12" fill="#3a3a3a"/><polygon points="121.6,1733.4 145.8,1749.6 121.6,1765.8" fill="#3a3a3a"/><rect x="169" y="1744" width="5" height="12" fill="#3a3a3a"/><polygon points="176,1737 195,1750 176,1763" fill="#3a3a3a"/><polygon points="222,1736 242,1750 222,1764" fill="#3a3a3a"/><rect x="242" y="1736" width="4" height="28" fill="#3a3a3a"/><rect x="308" y="1780" width="436" height="4" fill="#c8c8c8"/><rect x="306" y="1770" width="4" height="11" fill="#c8c8c8"/><rect x="354" y="1770" width="4" height="11" fill="#c8c8c8"/><rect x="402" y="1770" width="4" height="11" fill="#c8c8c8"/><rect x="450" y="1770" width="4" height="11" fill="#c8c8c8"/><rect x="498" y="1770" width="4" height="11" fill="#c8c8c8"/><rect x="546" y="1770" width="4" height="11" fill="#c8c8c8"/><rect x="594" y="1770" width="4" height="11" fill="#c8c8c8"/><rect x="642" y="1770" width="4" height="11" fill="#c8c8c8"/><rect x="690" y="1770" width="4" height="11" fill="#c8c8c8"/><rect x="738" y="1770" width="4" height="11" fill="#c8c8c8"/><rect x="524" y="1724" width="48" height="48" rx="4" fill="#fc4242"/><rect x="291" y="1731" width="4" height="4" fill="#0a84e8"/><rect x="317" y="1731" width="4" height="4" fill="#0a84e8"/><rect x="291" y="1757" width="4" height="4" fill="#0a84e8"/><rect x="298" y="1738" width="4" height="4" fill="#0a84e8"/><rect x="311" y="1738" width="4" height="4" fill="#0a84e8"/><rect x="298" y="1751" width="4" height="4" fill="#0a84e8"/><path d="M296,1733 h21 M293,1736 v21 M319,1736 v12 M296,1759 h13 M302,1740 h9 M300,1742 v9" stroke="#888" stroke-width="1.4"/><path d="M302,1753 Q312,1750 313,1742" fill="none" stroke="#555" stroke-width="1.2"/><path d="M310,1759 l3,4 l5,-1 l11,-11 l-5,-4 z" fill="#f5b841"/><circle cx="322" cy="1747" r="3.2" fill="#e82020"/><polygon points="309,1758 307,1764 313,1762" fill="#666"/><polygon points="340,1740 348,1732 372,1732 364,1740" fill="#8ccbf8" stroke="none" stroke-width="0" stroke-linejoin="miter" /><polygon points="340,1740 364,1740 364,1764 340,1764" fill="#6ab0e6" stroke="none" stroke-width="0" stroke-linejoin="miter" /><polygon points="364,1740 372,1732 372,1756 364,1764" fill="#4a96d0" stroke="none" stroke-width="0" stroke-linejoin="miter" /><path d="M389,1738.7 V1757.6 A15,5.5 0 0 0 419,1757.6 V1738.7 Z" fill="#6ab0e6"/><ellipse cx="404" cy="1738.7" rx="15" ry="5.5" fill="#8ccbf8" stroke="#6ab0e6" stroke-width="0.8"/><path d="M389,1723 l8,-8 M399,1723 l8,-8 M409,1723 l8,-8" stroke="#4a4a4a" stroke-width="3.2"/><path d="M452,1738 v20 M443,1748 h18" stroke="#2e2e2e" stroke-width="2.4"/><polygon points="452,1732 457.5,1740 446.5,1740" fill="#2e2e2e" stroke="none" stroke-width="0" stroke-linejoin="miter" /><polygon points="452,1763.6 457.5,1756 446.5,1756" fill="#2e2e2e" stroke="none" stroke-width="0" stroke-linejoin="miter" /><polygon points="436.6,1748 445,1742.5 445,1753.5" fill="#2e2e2e" stroke="none" stroke-width="0" stroke-linejoin="miter" /><polygon points="467.4,1748 459,1742.5 459,1753.5" fill="#2e2e2e" stroke="none" stroke-width="0" stroke-linejoin="miter" /><g transform="translate(484,1732) scale(0.5)"><polygon points="0.5,14.5 15,0 32.5,0 19.5,13" fill="#f4f4f4"/><path d="M0.5,14.5 H20.5 Q47.5,15.5 49,42.5 V62.5 H0.5 Z" fill="#dadada"/><polygon points="50,42.5 63.5,28.5 63.5,47.5 48.5,62.5 48.5,44.5" fill="#bcbcbc"/><path d="M32.5,0 h-17.5 l-14.5,14.5 v48.5 h48 l15,-15 v-19" fill="none" stroke="#555" stroke-width="2.6"/><path d="M23,12.5 L36,0 Q60.5,5.5 63.5,26.5 L50.5,39.5 Q46.5,15.5 23,12.5 Z" fill="#6ab0e6"/></g><polygon points="543,1736 547,1732 564,1732 560,1736" fill="#8ccbf8" stroke="none" stroke-width="0" stroke-linejoin="miter" /><polygon points="560,1736 564,1732 564,1749 560,1753" fill="#4a96d0" stroke="none" stroke-width="0" stroke-linejoin="miter" /><polygon points="532,1746 536,1742 543,1742 543,1746" fill="#8ccbf8" stroke="none" stroke-width="0" stroke-linejoin="miter" /><polygon points="532,1746 543,1746 543,1736 560,1736 560,1753 550,1753 550,1764 532,1764" fill="#6ab0e6" stroke="none" stroke-width="0" stroke-linejoin="miter" /><polygon points="550,1753 554,1753 554,1760 550,1764" fill="#4a96d0" stroke="none" stroke-width="0" stroke-linejoin="miter" /><polygon points="591,1736 595,1732 612,1732 608,1736" fill="#8ccbf8" stroke="none" stroke-width="0" stroke-linejoin="miter" /><polygon points="608,1736 612,1732 612,1749 608,1753" fill="#4a96d0" stroke="none" stroke-width="0" stroke-linejoin="miter" /><polygon points="580,1746 584,1742 591,1742 591,1746" fill="#8ccbf8" stroke="none" stroke-width="0" stroke-linejoin="miter" /><polygon points="580,1746 591,1746 591,1736 608,1736 608,1753 598,1753 598,1764 580,1764" fill="#6ab0e6" stroke="none" stroke-width="0" stroke-linejoin="miter" /><polygon points="598,1753 602,1753 602,1760 598,1764" fill="#4a96d0" stroke="none" stroke-width="0" stroke-linejoin="miter" /><polygon points="636,1732 652,1732 660,1740 660,1764 636,1764 628,1756 628,1746" fill="#f4f4f4" stroke="#444" stroke-width="1.3" stroke-linejoin="miter" /><polygon points="636,1753 649,1740 660,1740 660,1764 636,1764" fill="#dadada" stroke="none" stroke-width="0" stroke-linejoin="miter" /><polygon points="636,1764 660,1764 660,1740 652,1732 636,1732 628,1746 628,1756" fill="none" stroke="#444" stroke-width="1.3" stroke-linejoin="miter" /><polygon points="629,1746 642,1733 649,1740 636,1753" fill="#6ab0e6" stroke="none" stroke-width="0" stroke-linejoin="miter" /><g transform="translate(676,1732) scale(0.5)"><polygon points="0.5,14.5 15,0 32.5,0 19.5,13" fill="#f4f4f4"/><path d="M0.5,14.5 H20.5 Q47.5,15.5 49,42.5 V62.5 H0.5 Z" fill="#ececec"/><polygon points="50,42.5 63.5,28.5 63.5,47.5 48.5,62.5 48.5,44.5" fill="#e2e2e2"/><path d="M32.5,0 h-17.5 l-14.5,14.5 v48.5 h48 l15,-15 v-19" fill="none" stroke="#cfcfcf" stroke-width="2.6"/><path d="M23,12.5 L36,0 Q60.5,5.5 63.5,26.5 L50.5,39.5 Q46.5,15.5 23,12.5 Z" fill="#cfe2f3"/></g><g transform="translate(724,1732) scale(0.5)"><polygon points="0.5,14.5 15,0 32.5,0 19.5,13" fill="#f4f4f4"/><path d="M0.5,14.5 H20.5 Q47.5,15.5 49,42.5 V62.5 H0.5 Z" fill="#ececec"/><polygon points="50,42.5 63.5,28.5 63.5,47.5 48.5,62.5 48.5,44.5" fill="#e2e2e2"/><path d="M32.5,0 h-17.5 l-14.5,14.5 v48.5 h48 l15,-15 v-19" fill="none" stroke="#cfcfcf" stroke-width="2.6"/><path d="M23,12.5 L36,0 Q60.5,5.5 63.5,26.5 L50.5,39.5 Q46.5,15.5 23,12.5 Z" fill="#cfe2f3"/></g><path d="M752,1720 h24 v8 l-10,9.5 v46 h-4 v-46 l-10,-9.5 z" fill="#666"/><circle cx="2838" cy="1750" r="11.52" fill="#949494"/><rect x="2834.8" y="1734" width="6.4" height="9.6" fill="#949494" transform="rotate(0 2838 1750)"/><rect x="2834.8" y="1734" width="6.4" height="9.6" fill="#949494" transform="rotate(45 2838 1750)"/><rect x="2834.8" y="1734" width="6.4" height="9.6" fill="#949494" transform="rotate(90 2838 1750)"/><rect x="2834.8" y="1734" width="6.4" height="9.6" fill="#949494" transform="rotate(135 2838 1750)"/><rect x="2834.8" y="1734" width="6.4" height="9.6" fill="#949494" transform="rotate(180 2838 1750)"/><rect x="2834.8" y="1734" width="6.4" height="9.6" fill="#949494" transform="rotate(225 2838 1750)"/><rect x="2834.8" y="1734" width="6.4" height="9.6" fill="#949494" transform="rotate(270 2838 1750)"/><rect x="2834.8" y="1734" width="6.4" height="9.6" fill="#949494" transform="rotate(315 2838 1750)"/><circle cx="2838" cy="1750" r="5.5" fill="#f2f2f2"/><defs><linearGradient id="ng" x1="0" y1="0" x2="0" y2="1"><stop offset="0" stop-color="#f4f6f8"/><stop offset="1" stop-color="#c8ccd4"/></linearGradient><linearGradient id="lg" x1="0" y1="0" x2="0" y2="1"><stop offset="0" stop-color="#eef6f6"/><stop offset="1" stop-color="#d4e4e4"/></linearGradient><linearGradient id="gg" x1="0" y1="0" x2="0" y2="1"><stop offset="0" stop-color="#444"/><stop offset="1" stop-color="#222"/></linearGradient></defs><ellipse cx="1224.3" cy="1668.8" rx="14.5" ry="4.6" fill="none" stroke="#333" stroke-width="1.6"/><path d="M1221,1681.7 v-20 h-3 l6.3,-9.7 l6.3,9.7 h-3 v20 z" fill="url(#ng)" stroke="#333" stroke-width="1.3"/><polygon points="1214,1673 1218,1668 1218,1677" fill="#333"/><polygon points="1250.4,1663.8 1262,1663.8 1256.2,1671.5" fill="#2a2a2a" stroke="none" stroke-width="0" stroke-linejoin="miter" /><path d="M1278,1662.6 l7,-8 v8 z M1286,1661 l11,-4.5 v6 z" fill="#a8b0bc" stroke="#333" stroke-width="1"/><rect x="1276.5" y="1662.6" width="27.5" height="18" fill="#eceef2" stroke="#333" stroke-width="1.3" rx="1"/><rect x="1280.7" y="1666.5" width="18.3" height="9.9" fill="url(#gg)" opacity="0.6" stroke="#333" stroke-width="1"/><path d="M1334,1681 q-4,-6 -8,-10 q-2,-3 1,-4 q3,0 7,5 v-17 q0,-3 2.5,-3 q2.5,0 2.5,3 v10 v-14 q0,-3 2.5,-3 q2.5,0 2.5,3 v14 v-12 q0,-3 2.5,-3 q2.5,0 2.5,3 v13 q2,-8 3,-9 q2,-2 3,0 q1,1 0,4 l-4,16 q-2,5 -4,5 z" fill="#f0f0f2" stroke="#333" stroke-width="1.4"/><path d="M1398,1671 L1407,1679.5" stroke="#222" stroke-width="4" stroke-linecap="round"/><circle cx="1390" cy="1662.8" r="10.3" fill="url(#lg)" stroke="#333" stroke-width="1.5"/><path d="M1402,1656 h7 M1405.5,1652.5 v7 M1402,1661.5 h7" stroke="#333" stroke-width="1.2"/><rect x="1431.5" y="1653.5" width="29" height="28.5" fill="none" stroke="#666" stroke-width="1.1" stroke-dasharray="3,2"/><path d="M1450,1672 L1459,1680.5" stroke="#222" stroke-width="4" stroke-linecap="round"/><circle cx="1441.9" cy="1663.8" r="10.3" fill="url(#lg)" stroke="#333" stroke-width="1.5"/><polygon points="1472.1,1664 1483.9,1664 1478,1671" fill="#2a2a2a" stroke="none" stroke-width="0" stroke-linejoin="miter" /><rect x="1497.5" y="1652.5" width="29" height="23" rx="1.5" fill="#f2f2f2" stroke="#333" stroke-width="1.3"/><rect x="1500.7" y="1655.4" width="23" height="17.5" fill="#98b9e2" stroke="#1e3a78" stroke-width="1.2"/><path d="M1508,1676 v3 h-4 q-2,2 0,2.5 h16 q2,-0.5 0,-2.5 h-4 v-3 z" fill="#dde2ea" stroke="#333" stroke-width="1"/><polygon points="1532.3,1664 1544,1664 1538.1,1671" fill="#2a2a2a" stroke="none" stroke-width="0" stroke-linejoin="miter" /><defs><pattern id="gp" x="1559.5" y="1653.5" width="4" height="4" patternUnits="userSpaceOnUse"><rect width="4" height="4" fill="url(#gg)"/><rect x="1" y="1" width="3" height="3" fill="#fff"/></pattern><linearGradient id="gfade" x1="0" y1="0" x2="0" y2="1"><stop offset="0" stop-color="#fff" stop-opacity="0"/><stop offset="1" stop-color="#556" stop-opacity="0.45"/></linearGradient></defs><rect x="1559.5" y="1653.5" width="28" height="28" rx="1.5" fill="url(#gp)" stroke="#222" stroke-width="1.2"/><rect x="1559.5" y="1653.5" width="28" height="28" rx="1.5" fill="url(#gfade)"/><polygon points="1594.3,1664 1606,1664 1600.1,1671" fill="#2a2a2a" stroke="none" stroke-width="0" stroke-linejoin="miter" /><rect x="1621.5" y="1655.5" width="28" height="24" rx="1.5" fill="#cfe0f2" stroke="#1e3a78" stroke-width="1.2"/><rect x="1623.5" y="1657.5" width="11.5" height="9.5" fill="#98b9e2" stroke="#3a5a98" stroke-width="1"/><rect x="1636" y="1657.5" width="11.5" height="9.5" fill="#98b9e2" stroke="#3a5a98" stroke-width="1"/><rect x="1623.5" y="1668.5" width="11.5" height="9.5" fill="#98b9e2" stroke="#3a5a98" stroke-width="1"/><rect x="1636" y="1668.5" width="11.5" height="9.5" fill="#98b9e2" stroke="#3a5a98" stroke-width="1"/><polygon points="1656.2,1664 1668,1664 1662.1,1671" fill="#2a2a2a" stroke="none" stroke-width="0" stroke-linejoin="miter" /><path d="M2077.5,491 v20 M2080.5,493 v16" stroke="#666" stroke-width="1"/><circle cx="2105" cy="501" r="9" fill="#2e2e2e"/><rect x="2099" y="499.8" width="12" height="2.6" fill="#fff"/><polygon points="2842,495.6 2852,501.5 2842,507.4" fill="#222"/><polygon points="2851.5,495.6 2861.4,501.5 2851.5,507.4" fill="#222"/><polygon points="2372,550 2384,550 2402,568 2402,580 2372,580" fill="#f2f2f2" stroke="none" stroke-width="0" stroke-linejoin="miter" /><path d="M2372,549 h12" stroke="#555" stroke-width="2"/><path d="M2386.5,548.5 L2403.5,564" stroke="#1088e4" stroke-width="2"/><path d="M2403,568 v12" stroke="#555" stroke-width="2"/><polygon points="2592,550 2604,550 2622,568 2622,580 2592,580" fill="#d6e7fb" stroke="none" stroke-width="0" stroke-linejoin="miter" /><path d="M2592,549 h12" stroke="#7a8aa0" stroke-width="2"/><path d="M2606.5,548.5 L2623.5,564" stroke="#72b2ee" stroke-width="2"/><path d="M2623,568 v12" stroke="#7a8aa0" stroke-width="2"/><path d="M2110,730 h24 M2122,718 v24" stroke="#444" stroke-width="3.2"/><path d="M2167,723 l15,15 M2182,723 l-15,15" stroke="#444" stroke-width="3"/><polygon points="2366,782 2378,782 2396,800 2396,812 2366,812" fill="#f2f2f2" stroke="none" stroke-width="0" stroke-linejoin="miter" /><path d="M2366,781 h12" stroke="#555" stroke-width="2"/><path d="M2380.5,780.5 L2397.5,796" stroke="#1088e4" stroke-width="2"/><path d="M2397,800 v12" stroke="#555" stroke-width="2"/><polygon points="2783.5,792 2796,792 2789.7,800" fill="#2a2a2a" stroke="none" stroke-width="0" stroke-linejoin="miter" /><polygon points="2783.5,992 2796,992 2789.7,1000" fill="#2a2a2a" stroke="none" stroke-width="0" stroke-linejoin="miter" /><defs><linearGradient id="cur" x1="0" y1="0" x2="0" y2="1"><stop offset="0" stop-color="#fff"/><stop offset="1" stop-color="#aab0ba"/></linearGradient><linearGradient id="chk" x1="0" y1="0" x2="0" y2="1"><stop offset="0" stop-color="#f6f6f6"/><stop offset="1" stop-color="#c4c4c4"/></linearGradient></defs><path d="M2373.5,842 v24 l5.5,-5 l4.5,9 l4,-2 l-4.5,-8.5 h7.5 z" fill="url(#cur)" stroke="#222" stroke-width="1.3" stroke-linejoin="round"/><rect x="2369.8" y="903" width="24.5" height="24" rx="4" fill="url(#chk)" stroke="#333" stroke-width="1.6"/><path d="M2374,915 l5,6.5 l10,-14" fill="none" stroke="#000" stroke-width="2.6"/><rect x="2366" y="981" width="30" height="31" fill="#d4d4d4"/><polygon points="2366,986 2381,993 2396,986 2396,981 2366,981" fill="#f0f0f0" stroke="none" stroke-width="0" stroke-linejoin="miter" /><polygon points="2366,984 2376,981 2381,990 2381,1012 2376,1012 2366,1002" fill="#8ccbf8" stroke="none" stroke-width="0" stroke-linejoin="miter" /><polygon points="2381,990 2396,983 2396,994 2386,1000 2386,1012 2381,1012" fill="#4a96d0" stroke="none" stroke-width="0" stroke-linejoin="miter" /><polygon points="2371,993 2381,990 2386,1000 2386,1012 2376,1012 2376,998" fill="#6ab0e6" stroke="none" stroke-width="0" stroke-linejoin="miter" /><circle cx="2101.7" cy="1066" r="11.8" fill="#000"/><rect x="2099.5" y="1063" width="4.5" height="10" fill="#fff"/><rect x="2097.5" y="1071" width="8.5" height="2.4" fill="#fff"/><rect x="2097.5" y="1063" width="6" height="2.2" fill="#fff"/><circle cx="2101.7" cy="1058.8" r="2.3" fill="#fff"/><circle cx="1805" cy="1113.5" r="2.6" fill="#777"/><circle cx="1805" cy="1123" r="2.6" fill="#777"/><circle cx="1805" cy="1133" r="2.6" fill="#777"/><path d="M1608,1108 v32" stroke="#bbb" stroke-width="1.5" stroke-dasharray="2,2"/></svg>
</body></html>
